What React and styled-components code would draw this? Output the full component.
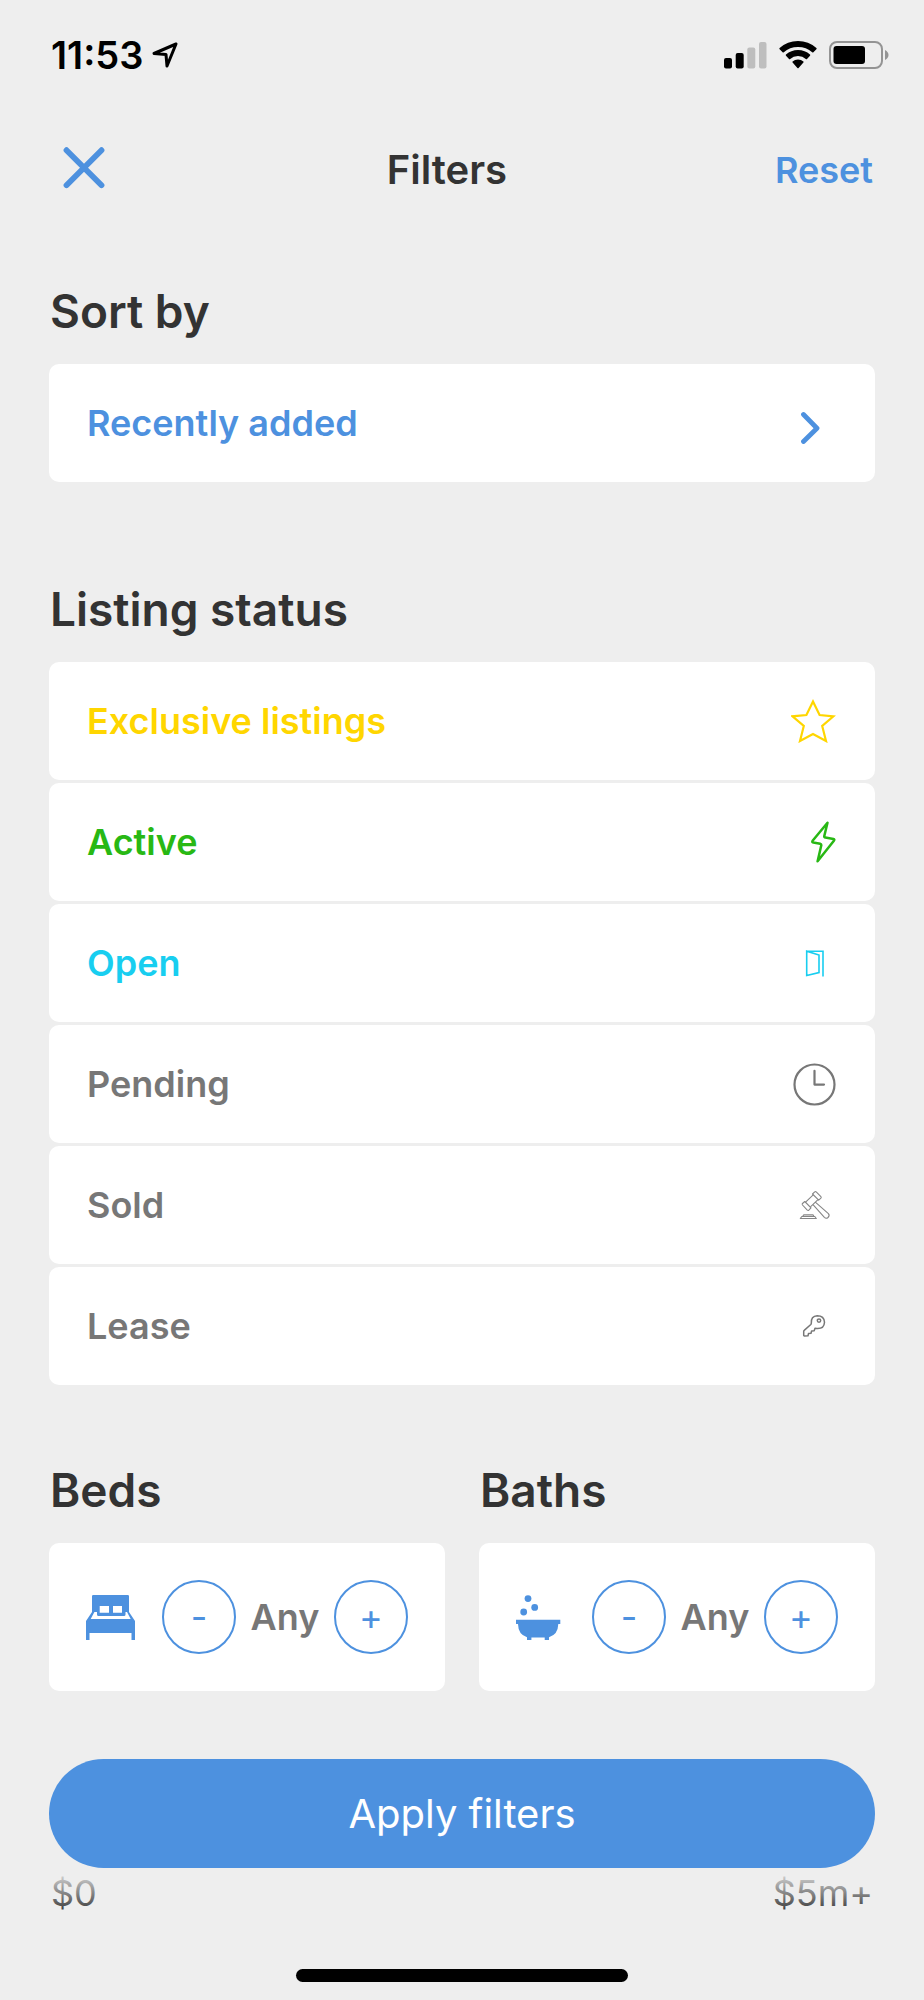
import React, { useState } from "react";
import styled, { createGlobalStyle, ThemeProvider } from "styled-components";

const theme = {
  page: "#eeeeee",
  ink: "#333333",
  muted: "#777777",
  blue: "#4d91df",
  gold: "#ffd600",
  green: "#28b814",
  cyan: "#18cef0",
};

const GlobalStyle = createGlobalStyle`
  *, *::before, *::after { box-sizing: border-box; }
  body {
    margin: 0;
    background: ${theme.page};
    color: ${theme.ink};
    font-family: Inter, "Liberation Sans", sans-serif;
  }
  button { font: inherit; color: inherit; border: 0; padding: 0; background: none; cursor: pointer; }
  h1, h2 { margin: 0; font-weight: 600; }
  svg { display: block; flex: none; }
`;

const Screen = styled.div`
  min-height: 100vh;
  display: flex;
  flex-direction: column;
  padding-bottom: 18px;
`;

const StatusBar = styled.div`
  height: 110px;
  padding: 0 35px 0 51px;
  display: flex;
  align-items: center;
  justify-content: space-between;
  color: #000;
`;

const StatusGroup = styled.div`
  display: flex;
  align-items: center;
  gap: ${(p) => p.$gap}px;
`;

const Clock = styled.time`
  font-size: 38px;
  font-weight: 600;
  line-height: 44px;
`;

const Header = styled.header`
  height: 120px;
  padding: 0 51px 0 49px;
  display: flex;
  align-items: center;
  justify-content: space-between;
`;

const CloseButton = styled.button`
  color: ${(p) => p.theme.blue};
`;

const Title = styled.h1`
  font-size: 40px;
  line-height: 50px;
`;

const ResetButton = styled.button`
  font-size: 36px;
  font-weight: 600;
  line-height: 44px;
  color: ${(p) => p.theme.blue};
`;

const Main = styled.main`
  padding: 52px 49px 0;
  display: flex;
  flex-direction: column;
`;

const Section = styled.section`
  margin-bottom: ${(p) => p.$after || 0}px;
  min-width: 0;
`;

const SectionTitle = styled.h2`
  padding-left: 1px;
  font-size: 46px;
  line-height: 58px;
  margin-bottom: 24px;
`;

const RowList = styled.div`
  display: flex;
  flex-direction: column;
  gap: 3px;
`;

const OptionRow = styled.button`
  width: 100%;
  height: 118px;
  padding: 0 39px 0 38px;
  border-radius: 10px;
  background: #fff;
  display: flex;
  align-items: center;
  justify-content: space-between;
  font-size: 36px;
  font-weight: 600;
  line-height: 44px;
  text-align: left;
  color: ${(p) => p.theme[p.$tone]};
`;

const CounterGrid = styled.div`
  display: grid;
  grid-template-columns: 1fr 1fr;
  gap: 34px;
  margin-bottom: 68px;
`;

const CounterCard = styled.div`
  height: 148px;
  padding: 0 37px;
  border-radius: 10px;
  background: #fff;
  display: grid;
  grid-template-columns: 76px 74px 1fr 74px;
  align-items: center;
  color: ${(p) => p.theme.blue};
`;

const StepButton = styled.button`
  width: 74px;
  height: 74px;
  border: 2px solid currentColor;
  border-radius: 50%;
  font-size: 36px;
  font-weight: 400;
  line-height: 40px;
`;

const CounterValue = styled.output`
  text-align: center;
  font-size: 36px;
  font-weight: 600;
  line-height: 44px;
  color: ${(p) => p.theme.muted};
`;

const ApplyButton = styled.button`
  height: 109px;
  border-radius: 55px;
  background: ${(p) => p.theme.blue};
  color: #fff;
  font-size: 40px;
  line-height: 50px;
`;

const PriceRange = styled.div`
  position: relative;
  display: flex;
  justify-content: space-between;
  padding: 0 2px;
  font-size: 36px;
  line-height: 50px;

  &::after {
    content: "";
    position: absolute;
    inset: 0;
    background: linear-gradient(rgba(238, 238, 238, 1) 0%, rgba(238, 238, 238, 0) 90%);
    pointer-events: none;
  }
`;

const HomeIndicator = styled.div`
  width: 36%;
  height: 13px;
  margin: 51px auto 0;
  border-radius: 7px;
  background: #000;
`;

const LocationIcon = () => (
  <svg width="26" height="26" viewBox="0 0 26 26" fill="none" stroke="currentColor" strokeWidth="3" strokeLinejoin="round" aria-hidden="true">
    <path d="M24 2L2 11.500L14 12.500L15 24Z" />
  </svg>
);

const SignalIcon = () => (
  <svg width="43" height="28" viewBox="0 0 43 28" fill="currentColor" aria-hidden="true">
    <rect x="0" y="17" width="8" height="10.500" rx="2" />
    <rect x="11.700" y="12" width="8" height="15.500" rx="2" />
    <rect x="23.300" y="6.500" width="8" height="21" rx="2" opacity=".2" />
    <rect x="35" y="1" width="7.500" height="26.500" rx="2" opacity=".2" />
  </svg>
);

const WifiIcon = () => (
  <svg width="38" height="28" viewBox="0 0 38 28" fill="currentColor" aria-hidden="true">
    <path d="M.6 8.200Q0 7.600.6 7Q8.400 0 19 0T37.400 7Q38 7.600 37.400 8.200L34.400 11.300Q33.800 11.800 33.200 11.300Q27.400 5.900 19 5.900T4.800 11.300Q4.200 11.800 3.600 11.300Z" />
    <path d="M7 14.800Q6.400 14.200 7 13.600Q12 9.100 19 9.100T31 13.600Q31.600 14.200 31 14.800L28 17.900Q27.400 18.400 26.800 17.900Q23.700 15 19 15T11.200 17.900Q10.600 18.400 10 17.900Z" />
    <path d="M13.600 21.600Q13 21 13.600 20.400Q15.800 18.600 19 18.600T24.400 20.400Q25 21 24.400 21.600L19.600 26.900Q19 27.500 18.400 26.900Z" />
  </svg>
);

const BatteryIcon = () => (
  <svg width="60" height="28" viewBox="0 0 60 28" aria-hidden="true">
    <rect x="1" y="1" width="52" height="26" rx="7" fill="none" stroke="#949494" strokeWidth="2" />
    <rect x="4.500" y="5" width="31.500" height="18" rx="3" fill="#000" />
    <path d="M56 9Q59.500 11 59.500 14T56 19Z" fill="#949494" />
  </svg>
);

const CloseIcon = () => (
  <svg width="70" height="70" viewBox="0 0 70 70" fill="none" stroke="currentColor" strokeWidth="5.800" strokeLinecap="round" aria-hidden="true">
    <path d="M17.500 15.200L52.500 50.200M52.500 15.200L17.500 50.200" />
  </svg>
);

const ChevronIcon = () => (
  <svg width="42" height="42" viewBox="0 0 42 42" fill="none" stroke="currentColor" strokeWidth="4.800" strokeLinecap="round" strokeLinejoin="round" aria-hidden="true">
    <path d="M9.500 12.500L23 26.200L9.500 39.500" />
  </svg>
);

const StarIcon = () => (
  <svg width="45" height="44" viewBox="0 0 45 44" fill="none" stroke="currentColor" strokeWidth="2.200" aria-hidden="true">
    <path d="M22 2.600L28.600 16L42.500 17.300L31.200 27L35 42L22 35L9 42L12.800 27L1.500 17.300L15.400 16Z" />
  </svg>
);

const BoltIcon = () => (
  <svg width="25" height="42" viewBox="0 0 25 42" fill="none" stroke="currentColor" strokeWidth="2.500" strokeLinejoin="round" aria-hidden="true">
    <path d="M16.500 1.800L1.600 19.800Q.8 21.200 2.300 21.600L9.200 22.700Q10.400 23 10.300 24.300L6.600 40.300L22.900 19.800Q23.900 18.300 22.400 17.900L14.400 16.600Q13 16.300 13.300 15Z" />
  </svg>
);

const DoorIcon = () => (
  <svg width="42" height="42" viewBox="0 0 42 42" fill="none" stroke="currentColor" strokeWidth="1.600" aria-hidden="true">
    <path d="M12.700 9.200H29V34.500M12.700 9.200V33.500L25 30.500V13Z" />
  </svg>
);

const ClockIcon = () => (
  <svg width="43" height="43" viewBox="0 0 43 43" fill="none" stroke="currentColor" strokeWidth="2.200" strokeLinecap="round" strokeLinejoin="round" aria-hidden="true">
    <circle cx="21.500" cy="21.500" r="20" />
    <path d="M21.500 7.800V21.600H31" />
  </svg>
);

const GavelIcon = () => (
  <svg width="42" height="42" viewBox="-6 -7 42 42" fill="none" stroke="#868686" strokeWidth="1.100" strokeLinejoin="round" aria-hidden="true">
    <path d="M12.500 3L14.700.9Q15.500.3 16.200.9L20.900 5.700Q21.600 6.500 20.900 7.200L18.700 9.200Z" />
    <path d="M4.800 10.500L2.500 12.500Q1.800 13.200 2.500 14L7.300 19.200Q8 19.800 8.800 19.200L11 16.900Z" />
    <path d="M5.600 11.200L13.200 3.900M10.400 15.900L18 8.600M13 13.600L24.400 26.300Q26 28 28 26.500Q30 24.500 28.400 22.700L15.300 11.200" />
    <path d="M.3 27.500L1.800 25.500H14.800L16.300 27.500ZM2.500 25.500L3.800 23.900H13L14 25.500" />
  </svg>
);

const KeyIcon = () => (
  <svg width="42" height="42" viewBox="-9 -10 42 42" fill="none" stroke="#777777" strokeWidth="1.500" strokeLinejoin="round" aria-hidden="true">
    <path d="M8.300 8.300Q7.800 1 14.200.7Q21.200.7 21.500 7.200Q21.200 13.800 14 13.500L12 13.300L11.200 15.700L8.600 16L8 18.300L5.500 18.500L5 20.800L1.400 21Q.7 21 .7 20.300V16.500Q.7 15.800 1.200 15.400L7.800 9.500Q8.300 9 8.300 8.300Z" />
    <circle cx="16" cy="5.600" r="1.700" />
  </svg>
);

const BedIcon = () => (
  <svg width="49" height="45" viewBox="0 0 49 45" fill="currentColor" aria-hidden="true">
    <path
      fillRule="evenodd"
      d="M6 1.200Q6 0 7.200 0H41.800Q43 0 43 1.200V17L49 26V45H45.500V38H3.500V45H0V26L6 17ZM13.700 11V17.700H23V11ZM27 11V17.700H36V11ZM8.400 17L4.700 24H44.700L41 17H39.500V19.500Q39.500 21 38 21H12.500Q11 21 11 19.500V17Z"
    />
  </svg>
);

const BathIcon = () => (
  <svg width="45" height="45" viewBox="0 0 45 45" fill="currentColor" aria-hidden="true">
    <circle cx="12" cy="3.600" r="3.400" />
    <circle cx="18.700" cy="12.400" r="3.400" />
    <circle cx="7.700" cy="17" r="3.400" />
    <path d="M0 24.700H44.300V29H42.300Q42 39.500 33 42.200V45H28.700V42.500H15.400V45H11V42.200Q2.200 39.500 2 29H0Z" />
  </svg>
);

const STATUSES = [
  { label: "Exclusive listings", tone: "gold", Icon: StarIcon },
  { label: "Active", tone: "green", Icon: BoltIcon },
  { label: "Open", tone: "cyan", Icon: DoorIcon },
  { label: "Pending", tone: "muted", Icon: ClockIcon },
  { label: "Sold", tone: "muted", Icon: GavelIcon },
  { label: "Lease", tone: "muted", Icon: KeyIcon },
];

function Counter({ title, Icon }) {
  const [count, setCount] = useState(0);
  return (
    <Section>
      <SectionTitle>{title}</SectionTitle>
      <CounterCard>
        <Icon />
        <StepButton type="button" aria-label={`Fewer ${title}`} onClick={() => setCount(Math.max(0, count - 1))}>
          -
        </StepButton>
        <CounterValue>{count === 0 ? "Any" : count}</CounterValue>
        <StepButton type="button" aria-label={`More ${title}`} onClick={() => setCount(count + 1)}>
          +
        </StepButton>
      </CounterCard>
    </Section>
  );
}

export default function App() {
  return (
    <ThemeProvider theme={theme}>
      <GlobalStyle />
      <Screen>
        <StatusBar>
          <StatusGroup $gap={9}>
            <Clock>11:53</Clock>
            <LocationIcon />
          </StatusGroup>
          <StatusGroup $gap={12}>
            <SignalIcon />
            <WifiIcon />
            <BatteryIcon />
          </StatusGroup>
        </StatusBar>
        <Header>
          <CloseButton type="button" aria-label="Close">
            <CloseIcon />
          </CloseButton>
          <Title>Filters</Title>
          <ResetButton type="button">Reset</ResetButton>
        </Header>
        <Main>
          <Section $after={98}>
            <SectionTitle>Sort by</SectionTitle>
            <OptionRow type="button" $tone="blue">
              Recently added
              <ChevronIcon />
            </OptionRow>
          </Section>
          <Section $after={76}>
            <SectionTitle>Listing status</SectionTitle>
            <RowList>
              {STATUSES.map(({ label, tone, Icon }) => (
                <OptionRow key={label} type="button" $tone={tone}>
                  {label}
                  <Icon />
                </OptionRow>
              ))}
            </RowList>
          </Section>
          <CounterGrid>
            <Counter title="Beds" Icon={BedIcon} />
            <Counter title="Baths" Icon={BathIcon} />
          </CounterGrid>
          <ApplyButton type="button">Apply filters</ApplyButton>
          <PriceRange>
            <span>$0</span>
            <span>$5m+</span>
          </PriceRange>
        </Main>
        <HomeIndicator />
      </Screen>
    </ThemeProvider>
  );
}
